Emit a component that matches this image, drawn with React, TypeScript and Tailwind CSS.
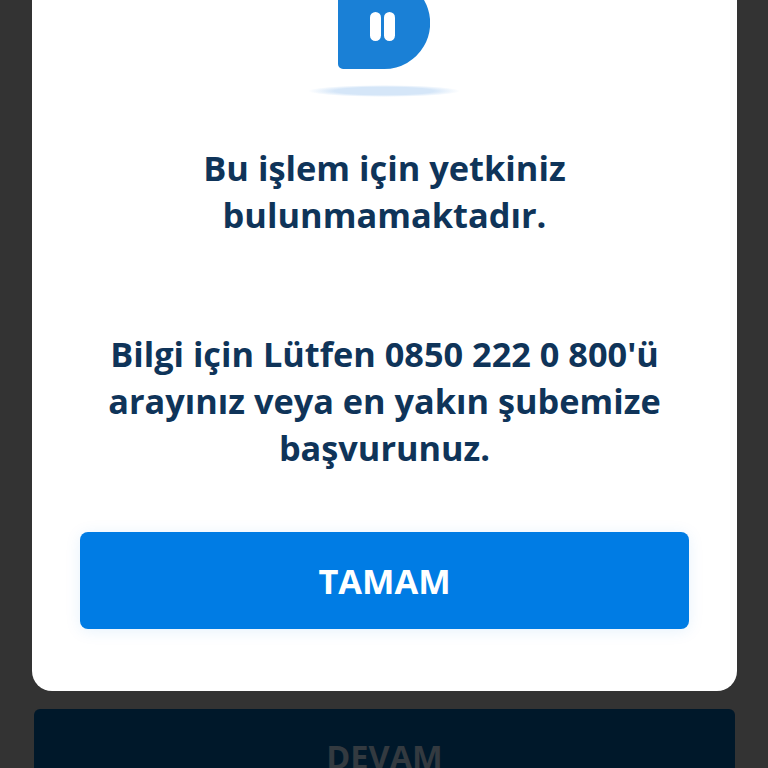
export default function App() {
  return (
    <div className="h-[768px] overflow-hidden bg-[#333333] px-8 font-['Open_Sans',sans-serif] font-bold">
      <div className="flex h-[691px] w-[705px] flex-col items-center rounded-b-[20px] bg-white">
        <svg width="92" height="69" viewBox="0 0 92 69" className="mr-[1px] shrink-0">
          <path d="M0 0H86A46 46 0 0 1 46 69H5A5 5 0 0 1 0 64Z" fill="#1a80d6" />
          <rect x="32" y="12" width="11" height="29" rx="5.5" fill="#fff" />
          <rect x="46" y="12" width="11" height="29" rx="5.5" fill="#fff" />
        </svg>
        <div className="mt-[16px] mr-[1px] h-[12px] w-[152px] rounded-[50%] bg-[radial-gradient(closest-side,#d5e6f8_65%,#ffffff)]" />
        <h1 className="mt-[47px] text-center text-[34.4px] leading-[47px] text-[#0f3459]">
          Bu işlem için yetkiniz
          <br />
          bulunmamaktadır.
        </h1>
        <p className="mt-[92px] text-center text-[34.3px] leading-[47px] text-[#0f3459]">
          Bilgi için Lütfen 0850 222 0 800'ü
          <br />
          arayınız veya en yakın şubemize
          <br />
          başvurunuz.
        </p>
        <button className="mt-[61px] h-[97px] w-[609px] rounded-[8px] bg-[#007ce4] text-[34.4px] text-white shadow-[0_2px_16px_rgba(0,124,228,0.1)]">
          TAMAM
        </button>
      </div>
      <div className="mx-[2px] mt-[18px] flex h-[97px] w-[701px] justify-center rounded-t-[6px] bg-[#00182a] pt-[24px] text-[32.5px] leading-[47px] text-[#333a40]">
        DEVAM
      </div>
    </div>
  );
}
